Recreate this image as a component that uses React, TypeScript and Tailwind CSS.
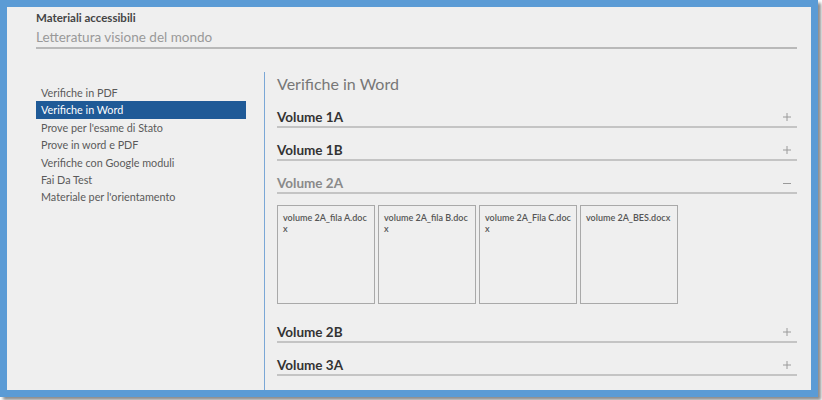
import React from "react";

const navItems = [
  "Verifiche in PDF",
  "Verifiche in Word",
  "Prove per l'esame di Stato",
  "Prove in word e PDF",
  "Verifiche con Google moduli",
  "Fai Da Test",
  "Materiale per l'orientamento",
];

const Plus = () => (
  <svg width="10" height="10" viewBox="0 0 10 10" className="block">
    <path d="M5 1v8M1 5h8" stroke="#9a9a9a" strokeWidth="1" />
  </svg>
);
const Minus = () => (
  <svg width="10" height="10" viewBox="0 0 10 10" className="block">
    <path d="M1 5.5h8" stroke="#9a9a9a" strokeWidth="1" />
  </svg>
);

function Row({ label, open = false }: { label: string; open?: boolean }) {
  return (
    <div className="flex items-center justify-between pt-[14px] pb-[1px] border-b-2 border-[#c4c4c4]">
      <span
        className={`text-[13.5px] leading-[16px] font-bold ${open ? "text-[#8a8a8a]" : "text-[#333333]"}`}
      >
        {label}
      </span>
      <span className="pr-[5px]">{open ? <Minus /> : <Plus />}</span>
    </div>
  );
}

const files: [string, string?][] = [
  ["volume 2A_fila A.doc", "x"],
  ["volume 2A_fila B.doc", "x"],
  ["volume 2A_Fila C.doc", "x"],
  ["volume 2A_BES.docx"],
];

export default function App() {
  return (
    <div
      className="w-[822px] h-[400px] bg-white relative overflow-hidden"
      style={{ fontFamily: "Lato, 'Noto Sans', sans-serif" }}
    >
      <div className="w-[818px] h-[397px] border-[7px] border-[#5b9bd5] bg-[#efefef] shadow-[3px_3px_3px_rgba(0,0,0,0.45)] flex flex-col">
        <div className="pl-[29px] pr-[14px] pt-[4px]">
          <div className="text-[11.5px] leading-[14px] font-bold text-[#444]">Materiali accessibili</div>
          <div className="mt-[3px] text-[13.5px] leading-[18px] text-[#999] border-b-2 border-[#b9b9b9] pb-[1px]">
            Letteratura visione del mondo
          </div>
        </div>
        <div className="flex flex-1 mt-[23px] pl-[29px] pr-[14px]">
          <div className="w-[210px] pt-[12px]">
            {navItems.map((t, i) => (
              <div
                key={t}
                className={`h-[17.4px] leading-[17.4px] pl-[5px] text-[10.8px] ${i === 1 ? "bg-[#1f5a97] text-white" : "text-[#5a5a5a]"}`}
              >
                {t}
              </div>
            ))}
          </div>
          <div className="ml-[18px] w-px bg-[#7aa7d6]" />
          <div className="flex-1 pl-[12px]">
            <div className="text-[16px] leading-[22px] pt-px text-[#777]">Verifiche in Word</div>
            <Row label="Volume 1A" />
            <Row label="Volume 1B" />
            <Row label="Volume 2A" open />
            <div className="flex gap-[3px] mt-[11px] mb-[6px]">
              {files.map(([a, b]) => (
                <div
                  key={a}
                  className="w-[98px] h-[99px] border border-[#a9a9a9] px-[5px] pt-[6px] text-[9px] leading-[11px] font-semibold text-[#555]"
                >
                  <div>{a}</div>
                  {b && <div>{b}</div>}
                </div>
              ))}
            </div>
            <Row label="Volume 2B" />
            <Row label="Volume 3A" />
          </div>
        </div>
      </div>
    </div>
  );
}
